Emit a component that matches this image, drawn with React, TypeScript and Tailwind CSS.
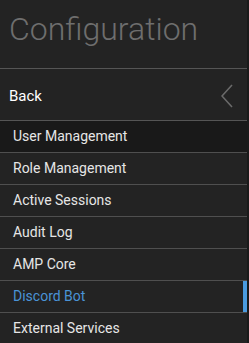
const ITEMS = [
  "User Management",
  "Role Management",
  "Active Sessions",
  "Audit Log",
  "AMP Core",
  "Discord Bot",
  "External Services",
];

const HOVERED = "User Management";
const ACTIVE = "Discord Bot";

function MenuItem({ label }: { label: string }) {
  const active = label === ACTIVE;
  const hovered = label === HOVERED;
  return (
    <div
      className={`relative flex h-[32px] shrink-0 items-center border-b border-[#4f4f4f] pl-[13px] text-[14px] ${
        hovered ? "bg-[#191919]" : ""
      } ${active ? "text-[#4a93d6]" : "text-[#e6e6e6]"}`}
    >
      {label}
      {active && <span className="absolute right-0 top-0 h-full w-[4px] bg-[#4a9be0]" />}
    </div>
  );
}

export default function App() {
  return (
    <div className="flex h-[343px] w-[249px] overflow-hidden bg-[#1a1a1a] font-['Roboto',sans-serif]">
      <div className="flex w-[247px] flex-col bg-[#232323]">
        <div className="h-[69px] shrink-0 border-b border-[#555] pl-[9px] pt-[7px] text-[32px] font-light leading-[44px] text-[#6e6e6e]">
          Configuration
        </div>
        <div className="flex h-[52px] shrink-0 items-center justify-between border-b border-[#555] pl-[9px] pr-[14px] pt-[3px] text-[15px] text-white">
          <span>Back</span>
          <svg width="12" height="24" viewBox="0 0 12 24" fill="none">
            <path d="M11 1 L1 12 L11 23" stroke="#6a6a6a" strokeWidth="1.6" />
          </svg>
        </div>
        {ITEMS.map((label) => (
          <MenuItem key={label} label={label} />
        ))}
      </div>
    </div>
  );
}
